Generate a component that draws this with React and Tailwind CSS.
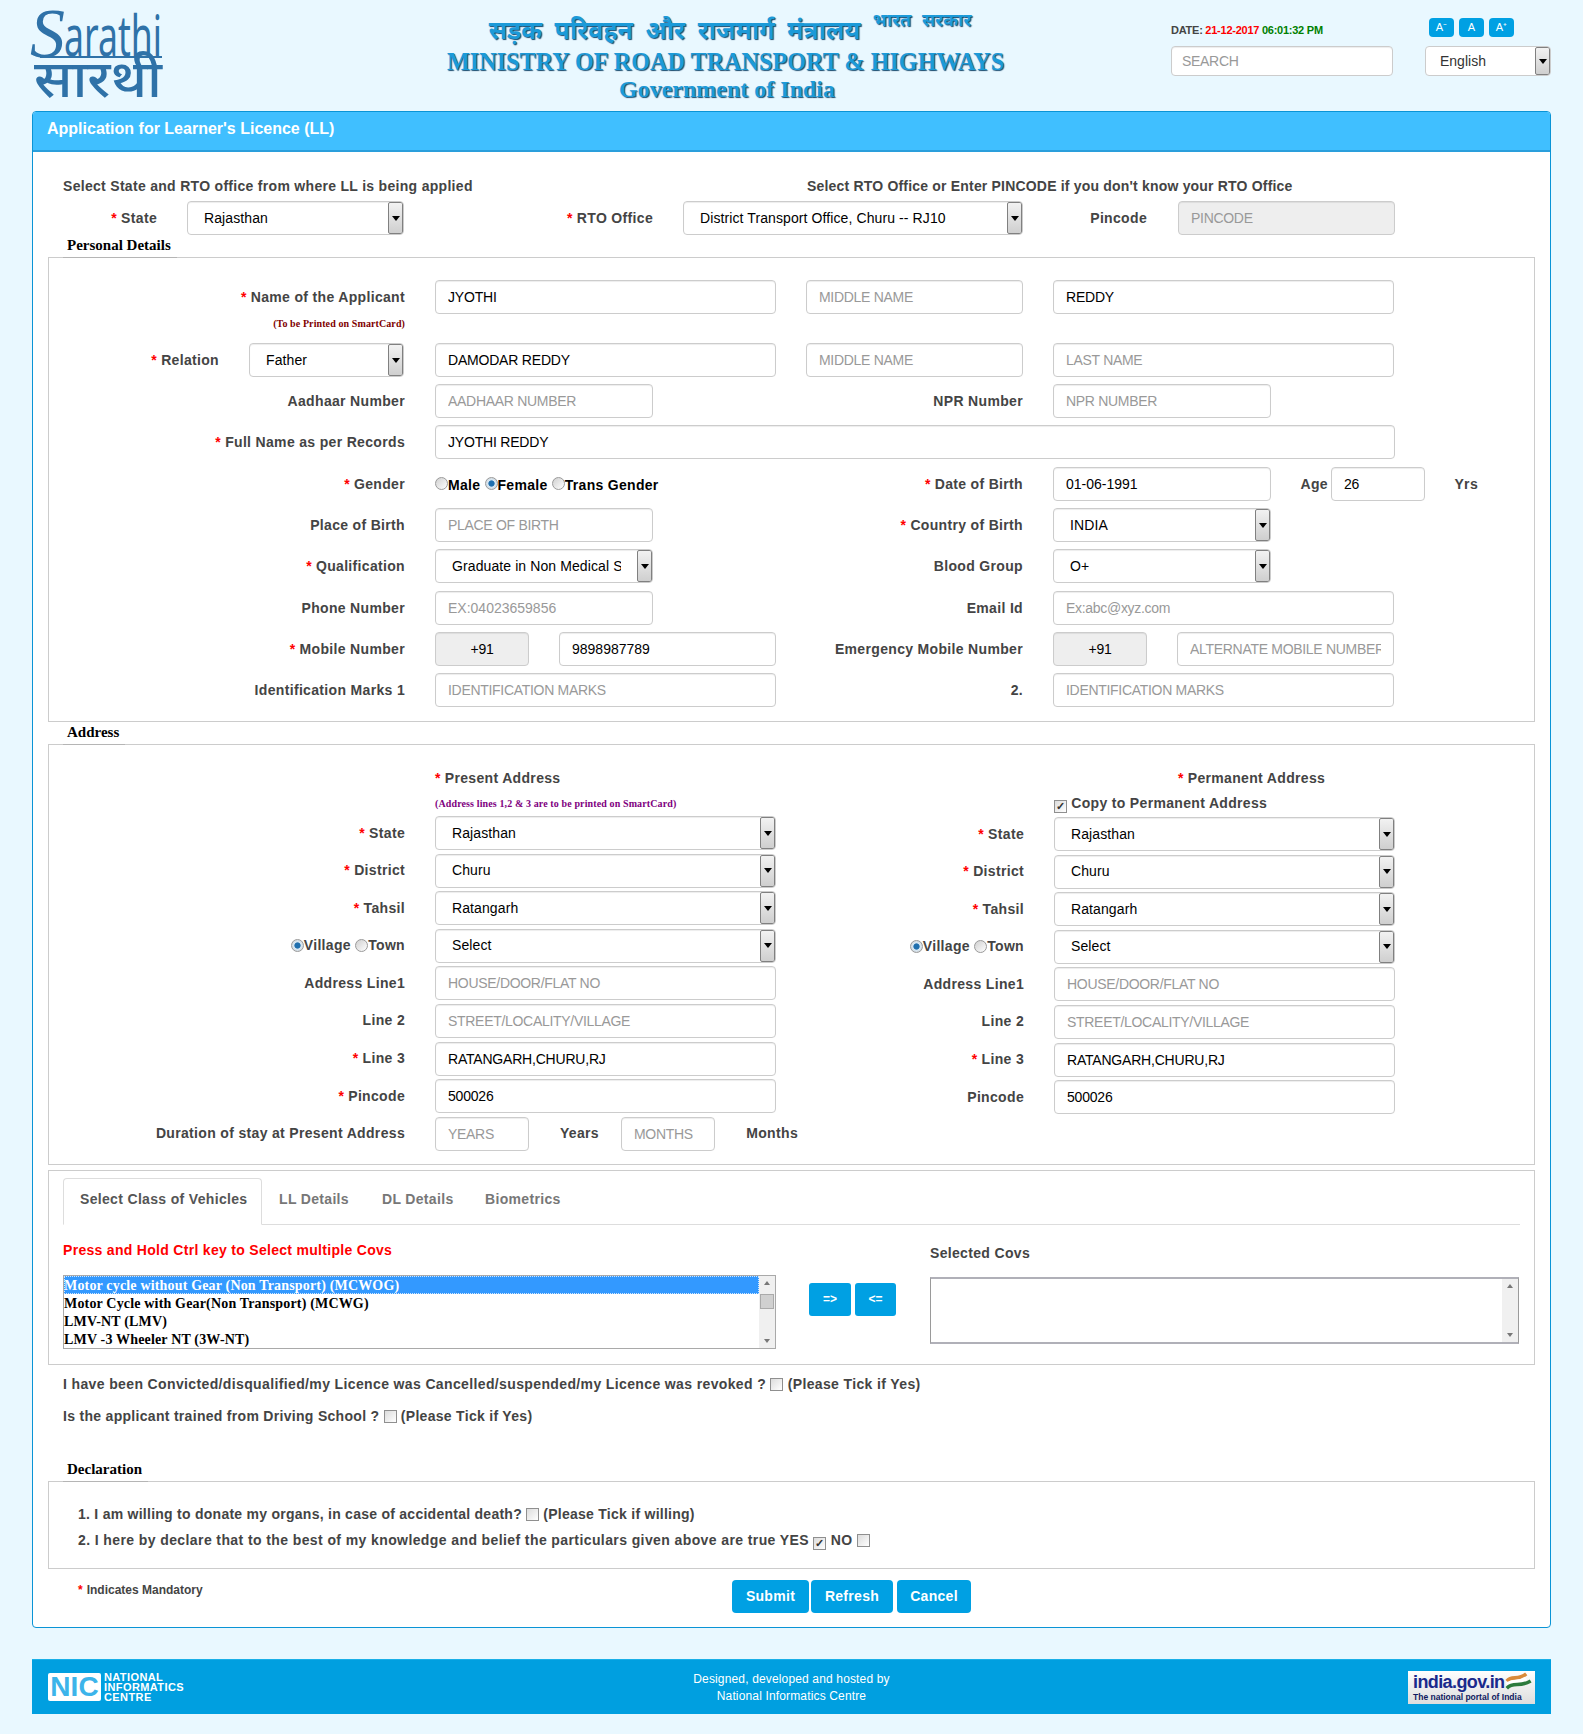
import React from "react";

const inputCls = "rounded-[4px] border border-[#cccccc] px-3 text-[14px] text-black outline-none tracking-[-0.2px] placeholder:text-[#999999] placeholder:tracking-[-0.3px] shadow-[inset_0_1px_1px_rgba(0,0,0,0.075)] shrink-0";

function Req() {
  return <span className="text-[#ff0000] mr-1">*</span>;
}

// right-aligned form label, width comes in through className
function Label({ className = "", req, children }) {
  return (
    <div className={`text-right text-[14px] font-bold text-[#444444] tracking-[0.33px] whitespace-nowrap shrink-0 ${className}`}>
      {req && <Req />}
      {children}
    </div>
  );
}

function Field({ className = "", h = "h-[34px]", value, placeholder, gray }) {
  return (
    <input
      readOnly
      defaultValue={value}
      placeholder={placeholder}
      className={`${inputCls} ${h} ${gray ? "bg-[#eeeeee]" : "bg-white"} ${className}`}
    />
  );
}

function ArrowBtn() {
  return (
    <div className="w-[15px] h-full shrink-0 flex items-center justify-center border border-[#808080] rounded-[2px] bg-gradient-to-b from-[#f2f2f2] to-[#cfcfcf]">
      <div className="w-0 h-0 border-x-[4px] border-x-transparent border-t-[5px] border-t-black" />
    </div>
  );
}

function Select({ className = "", value }) {
  return (
    <div className={`rounded-[4px] border border-[#cccccc] bg-white h-[34px] shrink-0 flex items-center text-[14px] tracking-[0.1px] text-black overflow-hidden shadow-[inset_0_1px_1px_rgba(0,0,0,0.075)] ${className}`}>
      <div className="flex-1 ml-4 mr-4 whitespace-nowrap overflow-hidden">{value}</div>
      <ArrowBtn />
    </div>
  );
}

function Radio({ on, low }) {
  return (
    <span className={`inline-block w-[13px] h-[13px] rounded-full border border-[#9a9a9a] ${low ? "align-[-2px]" : "align-[0px]"} ${on ? "bg-[radial-gradient(circle,#1f6fae_0_35%,#d8e8f4_45%,#cfcfcf_100%)]" : "bg-gradient-to-br from-[#d0d0d0] to-[#ffffff]"}`} />
  );
}

function Check({ on }) {
  return (
    <span className="inline-flex w-[13px] h-[13px] border border-[#8f8f8f] bg-gradient-to-br from-[#dcdcdc] to-white items-center justify-center align-[-2px] text-[11px] tracking-normal leading-none text-[#333333]">
      {on ? "✓" : ""}
    </span>
  );
}

function Legend({ children }) {
  return (
    <div className="relative z-10 font-['Liberation_Serif',serif] font-bold text-[15px] text-black h-[23px] mb-[-1px] leading-[20px] ml-[15px] pl-[4px] pr-[6px] w-fit border-b border-[#b5b5b5]">
      {children}
    </div>
  );
}

function Scrollbar({ thumb }) {
  return (
    <div className="w-[16px] h-full shrink-0 bg-[#f0f0f0] flex flex-col items-center justify-between py-[5px] relative">
      <div className="w-0 h-0 border-x-[3px] border-x-transparent border-b-[4px] border-b-[#777777]" />
      {thumb && <div className="absolute left-[1px] top-[18px] w-[14px] h-[15px] bg-[#d0d0d0] border border-[#aaaaaa]" />}
      <div className="w-0 h-0 border-x-[3px] border-x-transparent border-t-[4px] border-t-[#777777]" />
    </div>
  );
}

function SarathiLogo() {
  return (
    <svg width="132" height="92" viewBox="0 0 132 92" className="shrink-0 overflow-visible" fill="#2f72a8">
      <text x="-2" y="49" fontFamily="'Liberation Serif',serif" fontStyle="italic" fontSize="70">S</text>
      <text x="32" y="48" fontFamily="'Noto Sans',sans-serif" fontSize="56" textLength="98" lengthAdjust="spacingAndGlyphs">arathi</text>
      <rect x="8" y="48" width="122" height="2" />
      <text x="2" y="89" fontFamily="'Noto Sans',sans-serif" fontWeight="500" fontSize="52" textLength="128" lengthAdjust="spacingAndGlyphs">सारथी</text>
    </svg>
  );
}

function NicLogo() {
  return (
    <div className="flex items-center gap-[3px]">
      <div className="w-[53px] h-[28px] rounded-[2px] bg-white text-[#3cb4ea] font-black font-['Liberation_Sans',sans-serif] text-[28px] leading-[28px] text-center">NIC</div>
      <div className="font-['Liberation_Sans',sans-serif] font-bold text-[11px] leading-[10px] tracking-[0.4px] text-white text-left">
        NATIONAL<br />INFORMATICS<br />CENTRE
      </div>
    </div>
  );
}

function IndiaGovLogo() {
  return (
    <div className="w-[127px] h-[33px] bg-gradient-to-b from-white to-[#dddddd] flex flex-col pl-[5px] pr-[3px] font-['Liberation_Sans',sans-serif] font-bold text-left">
      <div className="flex items-center h-[22px]">
        <span className="text-[#1a2a8c] text-[18px] leading-[22px] tracking-[-0.6px]">india.gov.in</span>
        <svg width="30" height="19" viewBox="0 0 30 19" fill="none" strokeWidth="4" className="ml-[1px]">
          <path d="M2 9 C8 2 14 9 24 1" stroke="#d98a3a" />
          <path d="M2 13 C8 7 14 13 24 6" stroke="#ffffff" />
          <path d="M2 17 C10 9 16 17 29 9" stroke="#2c7a3c" />
        </svg>
      </div>
      <div className="text-[8.5px] leading-[9px] tracking-[0px] text-[#101a60] whitespace-nowrap">The national portal of India</div>
    </div>
  );
}

function AddressCol({ rows, last }) {
  return (
    <div className="flex flex-col gap-[3.6px]">
      {rows}
      {last}
    </div>
  );
}

function addressRows(right) {
  const lw = right ? "w-[248px]" : "w-[356px]";
  const villageTown = (
    <Label className={lw}>
      <Radio on low />Village <Radio low />Town
    </Label>
  );
  return (
    <>
      <div className="flex items-center h-[34px]"><Label className={lw} req>State</Label><Select className="w-[341px] ml-[30px]" value="Rajasthan" /></div>
      <div className="flex items-center h-[34px]"><Label className={lw} req>District</Label><Select className="w-[341px] ml-[30px]" value="Churu" /></div>
      <div className="flex items-center h-[34px]"><Label className={lw} req>Tahsil</Label><Select className="w-[341px] ml-[30px]" value="Ratangarh" /></div>
      <div className="flex items-center h-[34px]">{villageTown}<Select className="w-[341px] ml-[30px]" value="Select" /></div>
      <div className="flex items-center h-[34px]"><Label className={lw}>Address Line1</Label><Field className="w-[341px] ml-[30px]" placeholder="HOUSE/DOOR/FLAT NO" /></div>
      <div className="flex items-center h-[34px]"><Label className={lw}>Line 2</Label><Field className="w-[341px] ml-[30px]" placeholder="STREET/LOCALITY/VILLAGE" /></div>
      <div className="flex items-center h-[34px]"><Label className={lw} req>Line 3</Label><Field className="w-[341px] ml-[30px]" value="RATANGARH,CHURU,RJ" /></div>
      <div className="flex items-center h-[34px]"><Label className={lw} req={!right}>Pincode</Label><Field className="w-[341px] ml-[30px]" value="500026" /></div>
    </>
  );
}

const covs = [
  "Motor cycle without Gear (Non Transport) (MCWOG)",
  "Motor Cycle with Gear(Non Transport) (MCWG)",
  "LMV-NT (LMV)",
  "LMV -3 Wheeler NT (3W-NT)",
];

export default function App() {
  return (
    <div className="min-h-[1734px] bg-[#e9f8ff] px-[32px] font-['Liberation_Sans',Arial,sans-serif] text-[#444444]">
      {/* top header */}
      <header className="h-[111px] flex items-start">
        <div className="pt-[8px] w-[415px] shrink-0"><SarathiLogo /></div>
        <div className="w-[560px] shrink-0 text-center font-['Liberation_Serif',serif] font-bold [text-shadow:1px_1px_1px_#174a6e]">
          <div className="h-[49px] pt-[3px] pl-[6px] text-[25px] leading-[32px] text-[#1c9ad8] whitespace-nowrap [word-spacing:6px] font-['Noto_Sans',sans-serif]">
            सड़क परिवहन और राजमार्ग मंत्रालय <span className="text-[18px] align-[13px] [word-spacing:6px]">भारत सरकार</span>
          </div>
          <div className="text-[24.2px] leading-[26px] pr-[15px] text-[#1c9ad8] whitespace-nowrap">MINISTRY OF ROAD TRANSPORT &amp; HIGHWAYS</div>
          <div className="text-[24px] leading-[27px] pt-[1px] text-[#1c9ad8]">Government of India</div>
        </div>
        <div className="ml-[164px] w-[222px] shrink-0 pt-[24px]">
          <div className="text-[11px] font-bold leading-[12px] h-[22px] tracking-[-0.25px] whitespace-nowrap">
            DATE: <span className="text-[#ff0000]">21-12-2017</span> <span className="text-[#008000]">06:01:32 PM</span>
          </div>
          <Field className="w-[222px] !px-[10px]" h="h-[30px]" placeholder="SEARCH" />
        </div>
        <div className="ml-[32px] w-[126px] shrink-0 pt-[18px]">
          <div className="flex gap-[5px] h-[28px] pl-[4px]">
            {["A⁻", "A", "A⁺"].map((t) => (
              <div key={t} className="w-[25px] h-[19px] rounded-[4px] bg-[#00a0e3] text-white text-[11px] leading-[19px] text-center">{t}</div>
            ))}
          </div>
          <div className="rounded-[4px] border border-[#cccccc] bg-white h-[30px] flex items-center text-[14px] text-[#333333] overflow-hidden">
            <div className="flex-1 pl-[14px]">English</div>
            <ArrowBtn />
          </div>
        </div>
      </header>

      {/* main panel */}
      <main className="h-[1517px] border border-[#0a94d6] rounded-[4px] bg-white overflow-hidden">
        <div className="h-[40px] bg-[#40bfff] border-b-2 border-[#2a9fdc] px-[14px] text-white text-[16px] font-bold leading-[34px]">
          Application for Learner's Licence (LL)
        </div>

        <div className="pt-[24px] px-[15px]">
          <div className="flex h-[20px] text-[14px] font-bold leading-[20px] pl-[15px]">
            <div className="w-[744px] shrink-0 tracking-[0.3px]">Select State and RTO office from where LL is being applied</div>
            <div className="tracking-[0.19px]">Select RTO Office or Enter PINCODE if you don't know your RTO Office</div>
          </div>
          <div className="flex items-center mt-[5px] h-[34px]">
            <Label className="w-[109px]" req>State</Label>
            <Select className="w-[217px] ml-[30px]" value="Rajasthan" />
            <Label className="w-[249px]" req>RTO Office</Label>
            <Select className="w-[340px] ml-[30px]" value="District Transport Office, Churu -- RJ10" />
            <Label className="w-[124px]">Pincode</Label>
            <Field className="w-[217px] ml-[31px]" placeholder="PINCODE" gray />
          </div>

          <Legend>Personal Details</Legend>
          <section className="border border-[#cccccc] h-[465px] w-[1487px] pt-[22px]">
            <div className="flex items-center h-[34px]">
              <Label className="w-[356px]" req>Name of the Applicant</Label>
              <Field className="w-[341px] ml-[30px]" value="JYOTHI" />
              <Field className="w-[217px] ml-[30px]" placeholder="MIDDLE NAME" />
              <Field className="w-[341px] ml-[30px]" value="REDDY" />
            </div>
            <div className="w-[356px] h-[29px] text-right font-['Liberation_Serif',serif] text-[10px] font-bold text-[#800000] leading-[20px] tracking-[0.1px]">(To be Printed on SmartCard)</div>
            <div className="flex items-center h-[34px]">
              <Label className="w-[170px]" req>Relation</Label>
              <Select className="w-[155px] ml-[30px]" value="Father" />
              <Field className="w-[341px] ml-[31px]" value="DAMODAR REDDY" />
              <Field className="w-[217px] ml-[30px]" placeholder="MIDDLE NAME" />
              <Field className="w-[341px] ml-[30px]" placeholder="LAST NAME" />
            </div>
            <div className="flex items-center h-[34px] mt-[7px]">
              <Label className="w-[356px]">Aadhaar Number</Label>
              <Field className="w-[218px] ml-[30px]" placeholder="AADHAAR NUMBER" />
              <Label className="w-[370px]">NPR Number</Label>
              <Field className="w-[218px] ml-[30px]" placeholder="NPR NUMBER" />
            </div>
            <div className="flex items-center h-[34px] mt-[7px]">
              <Label className="w-[356px]" req>Full Name as per Records</Label>
              <Field className="w-[960px] ml-[30px]" value="JYOTHI REDDY" />
            </div>
            <div className="flex items-center h-[34px] mt-[8px]">
              <Label className="w-[356px]" req>Gender</Label>
              <div className="w-[218px] ml-[30px] text-[14px] font-bold text-black whitespace-nowrap pt-[2px] tracking-[0.3px]">
                <Radio />Male <Radio on />Female <Radio />Trans Gender
              </div>
              <Label className="w-[370px]" req>Date of Birth</Label>
              <Field className="w-[218px] ml-[30px] !tracking-[0px]" value="01-06-1991" />
              <Label className="w-[57px]">Age</Label>
              <Field className="w-[94px] ml-[3px]" value="26" />
              <Label className="w-[53px]">Yrs</Label>
            </div>
            <div className="flex items-center h-[34px] mt-[7px]">
              <Label className="w-[356px]">Place of Birth</Label>
              <Field className="w-[218px] ml-[30px]" placeholder="PLACE OF BIRTH" />
              <Label className="w-[370px]" req>Country of Birth</Label>
              <Select className="w-[218px] ml-[30px]" value="INDIA" />
            </div>
            <div className="flex items-center h-[34px] mt-[7px]">
              <Label className="w-[356px]" req>Qualification</Label>
              <Select className="w-[218px] ml-[30px]" value="Graduate in Non Medical Science" />
              <Label className="w-[370px]">Blood Group</Label>
              <Select className="w-[218px] ml-[30px]" value="O+" />
            </div>
            <div className="flex items-center h-[34px] mt-[8px]">
              <Label className="w-[356px]">Phone Number</Label>
              <Field className="w-[218px] ml-[30px] placeholder:!tracking-[0px]" placeholder="EX:04023659856" />
              <Label className="w-[370px]">Email Id</Label>
              <Field className="w-[341px] ml-[30px]" placeholder="Ex:abc@xyz.com" />
            </div>
            <div className="flex items-center h-[34px] mt-[7px]">
              <Label className="w-[356px]" req>Mobile Number</Label>
              <Field className="w-[94px] ml-[30px] text-center" value="+91" gray />
              <Field className="w-[217px] ml-[30px] !tracking-[0px]" value="9898987789" />
              <Label className="w-[247px]">Emergency Mobile Number</Label>
              <Field className="w-[94px] ml-[30px] text-center" value="+91" gray />
              <Field className="w-[217px] ml-[30px]" placeholder="ALTERNATE MOBILE NUMBER" />
            </div>
            <div className="flex items-center h-[34px] mt-[7px]">
              <Label className="w-[356px]">Identification Marks 1</Label>
              <Field className="w-[341px] ml-[30px]" placeholder="IDENTIFICATION MARKS" />
              <Label className="w-[247px]">2.</Label>
              <Field className="w-[341px] ml-[30px]" placeholder="IDENTIFICATION MARKS" />
            </div>
          </section>

          <Legend>Address</Legend>
          <section className="border border-[#cccccc] h-[421px] w-[1487px] flex">
            <div className="w-[727px] shrink-0">
              <div className="ml-[386px] mt-[23px] h-[20px] leading-[20px] text-[14px] font-bold tracking-[0.33px] whitespace-nowrap"><Req />Present Address</div>
              <div className="ml-[386px] mt-[6px] h-[20px] leading-[20px] font-['Liberation_Serif',serif] text-[10px] font-bold text-[#800080] tracking-[0.12px] whitespace-nowrap">(Address lines 1,2 &amp; 3 are to be printed on SmartCard)</div>
              <div className="mt-[2px]">
                <AddressCol
                  rows={addressRows(false)}
                  last={
                    <div className="flex items-center h-[34px]">
                      <Label className="w-[356px]">Duration of stay at Present Address</Label>
                      <Field className="w-[94px] ml-[30px]" placeholder="YEARS" />
                      <Label className="w-[70px]">Years</Label>
                      <Field className="w-[94px] ml-[22px]" placeholder="MONTHS" />
                      <Label className="w-[83px]">Months</Label>
                    </div>
                  }
                />
              </div>
            </div>
            <div className="w-[680px] shrink-0">
              <div className="ml-[402px] mt-[23px] h-[20px] leading-[20px] text-[14px] font-bold tracking-[0.33px] whitespace-nowrap"><Req />Permanent Address</div>
              <div className="ml-[278px] mt-[5px] h-[20px] leading-[20px] text-[14px] font-bold tracking-[0.33px] whitespace-nowrap"><Check on /> Copy to Permanent Address</div>
              <div className="mt-[4px]">
                <AddressCol rows={addressRows(true)} />
              </div>
            </div>
          </section>

          <section className="mt-[5px] border border-[#cccccc] h-[195px] w-[1487px] pt-[7px] px-[14px]">
            <nav className="h-[47px] flex border-b border-[#dddddd] text-[14px] font-bold tracking-[0.33px] leading-[43px] text-[#777777]">
              <div className="w-[199px] h-[47px] bg-white border border-[#dddddd] border-b-white rounded-t-[4px] px-[16px] leading-[41px] text-[#555555] whitespace-nowrap">Select Class of Vehicles</div>
              <div className="pl-[17px] w-[119px]">LL Details</div>
              <div className="pl-[1px] w-[104px]">DL Details</div>
              <div>Biometrics</div>
            </nav>
            <div className="flex">
              <div className="w-[713px] shrink-0">
                <div className="mt-[15px] h-[20px] leading-[20px] text-[14px] font-bold text-[#ff0000] tracking-[0.3px]">Press and Hold Ctrl key to Select multiple Covs</div>
                <div className="mt-[15px] h-[74px] border border-[#a9a9a9] flex bg-white font-['Liberation_Serif',serif] font-bold text-[14px] text-black tracking-[0.17px]">
                  <div className="flex-1 leading-[20px]">
                    {covs.map((c, i) => (
                      <div key={c} className={`h-[18px] whitespace-nowrap ${i === 0 ? "bg-[#3399ff] text-white outline-1 outline-dotted outline-[#cfe6ff] -outline-offset-1" : ""}`}>{c}</div>
                    ))}
                  </div>
                  <Scrollbar thumb />
                </div>
              </div>
              <div className="ml-[33px] pt-[58px] flex gap-[4px] shrink-0">
                <div className="w-[42px] h-[33px] rounded-[3px] bg-[#00a0e3] text-white text-[12px] font-bold leading-[33px] text-center">=&gt;</div>
                <div className="w-[41px] h-[33px] rounded-[3px] bg-[#00a0e3] text-white text-[12px] font-bold leading-[33px] text-center">&lt;=</div>
              </div>
              <div className="ml-[34px] pt-[18px] w-[589px] shrink-0">
                <div className="h-[20px] leading-[20px] text-[14px] font-bold tracking-[0.33px]">Selected Covs</div>
                <div className="mt-[14px] h-[67px] border border-[#9a9a9a] border-y-2 border-y-[#b0b0b8] flex justify-end bg-white">
                  <Scrollbar />
                </div>
              </div>
            </div>
          </section>

          <div className="mt-[9px] ml-[15px] h-[20px] leading-[20px] text-[14px] font-bold tracking-[0.37px] whitespace-nowrap">
            I have been Convicted/disqualified/my Licence was Cancelled/suspended/my Licence was revoked ? <Check /> (Please Tick if Yes)
          </div>
          <div className="mt-[12px] ml-[15px] h-[20px] leading-[20px] text-[14px] font-bold tracking-[0.3px] whitespace-nowrap">
            Is the applicant trained from Driving School ? <Check /> (Please Tick if Yes)
          </div>

          <div className="mt-[33px]"><Legend>Declaration</Legend></div>
          <section className="border border-[#cccccc] h-[88px] w-[1487px] pt-[22px] pl-[29px] text-[14px] font-bold leading-[20px]">
            <div className="h-[20px] whitespace-nowrap tracking-[0.26px]">1. I am willing to donate my organs, in case of accidental death? <Check /> (Please Tick if willing)</div>
            <div className="h-[20px] mt-[6px] whitespace-nowrap tracking-[0.4px]">2. I here by declare that to the best of my knowledge and belief the particulars given above are true YES <Check on /> NO <Check /></div>
          </section>

          <div className="mt-[11px] flex items-start">
            <div className="w-[684px] shrink-0 pl-[30px] text-[12px] font-bold leading-[20px] whitespace-nowrap"><Req />Indicates Mandatory</div>
            <div className="w-[77px] h-[33px] rounded-[4px] bg-[#00a0e3] text-white text-[14px] font-bold leading-[33px] text-center tracking-[0.3px]">Submit</div>
            <div className="ml-[2px] w-[82px] h-[33px] rounded-[4px] bg-[#00a0e3] text-white text-[14px] font-bold leading-[33px] text-center tracking-[0.3px]">Refresh</div>
            <div className="ml-[4px] w-[74px] h-[33px] rounded-[4px] bg-[#00a0e3] text-white text-[14px] font-bold leading-[33px] text-center tracking-[0.3px]">Cancel</div>
          </div>
        </div>
      </main>

      <footer className="mt-[31px] h-[55px] bg-[#009fe0] border-t border-[#1ab0e8] flex items-center justify-between pl-[16px] pr-[16px] text-white text-[12px] leading-[17px] tracking-[0.15px] text-center">
        <NicLogo />
        <div className="pt-[2px] mr-[9px]">Designed, developed and hosted by<br />National Informatics Centre</div>
        <IndiaGovLogo />
      </footer>
    </div>
  );
}
